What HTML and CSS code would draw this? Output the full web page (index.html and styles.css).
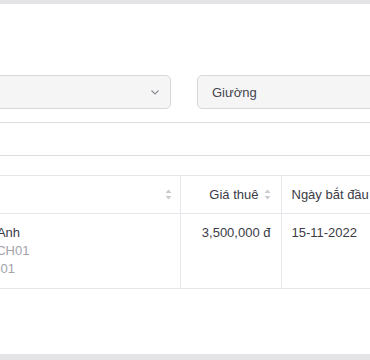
FILE: index.html
```html
<!DOCTYPE html>
<html lang="vi">

<head>
    <meta charset="UTF-8">
    <meta name="viewport" content="width=device-width, initial-scale=1.0">
    <title>Hợp đồng thuê</title>
    <link rel="stylesheet" href="styles.css">
</head>

<body>
    <div class="topbar"></div>

    <main class="panel">
        <div class="filters">
            <div class="select">
                <span class="select-value"></span>
                <svg class="select-arrow" width="8" height="5" viewBox="0 0 8 5">
                    <polyline points="0.5,0.5 4,4 7.5,0.5" fill="none" stroke="#8a8a92" stroke-width="1.1" />
                </svg>
            </div>
            <div class="select">
                <span class="select-value">Giường</span>
            </div>
        </div>

        <div class="toolbar"></div>

        <table class="grid">
            <colgroup>
                <col class="col-name">
                <col class="col-price">
                <col class="col-date">
            </colgroup>
            <thead>
                <tr>
                    <th>
                        <div class="th-inner spread">
                            <span>Khách</span>
                            <svg class="sort" width="7" height="11" viewBox="0 0 7 11">
                                <polygon points="3.5,0.5 6.5,4 0.5,4" />
                                <polygon points="0.5,7 6.5,7 3.5,10.5" />
                            </svg>
                        </div>
                    </th>
                    <th>
                        <div class="th-inner end">
                            <span>Giá thuê</span>
                            <svg class="sort" width="7" height="11" viewBox="0 0 7 11">
                                <polygon points="3.5,0.5 6.5,4 0.5,4" />
                                <polygon points="0.5,7 6.5,7 3.5,10.5" />
                            </svg>
                        </div>
                    </th>
                    <th>
                        <div class="th-inner">Ngày bắt đầu</div>
                    </th>
                </tr>
            </thead>
            <tbody>
                <tr>
                    <td>
                        <div>Lê Tuấn Anh</div>
                        <div class="muted">Căn hộ: CH01</div>
                        <div class="muted">Phòng: P01</div>
                    </td>
                    <td class="num">3,500,000 đ</td>
                    <td>15-11-2022</td>
                </tr>
            </tbody>
        </table>
    </main>

    <div class="bottombar"></div>
</body>

</html>
```

FILE: styles.css
```css
html,
body {
    margin: 0;
    width: 370px;
    height: 360px;
    overflow: hidden;
}

body {
    font-family: "Liberation Sans", Arial, sans-serif;
    font-size: 13px;
    color: #3b3b46;
    background: #fff;
}

.topbar {
    height: 4px;
    background: #e4e4e6;
}

.bottombar {
    height: 6px;
    background: #e4e4e6;
}

.panel {
    box-sizing: border-box;
    height: 350px;
    padding-top: 71px;
    background: #fff;
}

.filters {
    display: flex;
    gap: 26px;
    margin-left: -29px;
}

.select {
    box-sizing: border-box;
    flex: none;
    width: 200px;
    height: 34px;
    display: flex;
    align-items: center;
    padding: 0 11px 0 14px;
    border: 1px solid #d7d7dd;
    border-radius: 5px;
    background: #f5f5f6;
    color: #44444e;
}

.select-arrow {
    margin-left: auto;
}

.toolbar {
    margin-top: 13px;
    height: 32px;
    border-top: 1px solid #dcdce2;
    border-bottom: 1px solid #dcdce2;
}

.grid {
    margin-top: 19px;
    margin-left: -63px;
    width: 544px;
    table-layout: fixed;
    border-collapse: collapse;
}

.col-name {
    width: 243px;
}

.col-price {
    width: 101px;
}

.grid th,
.grid td {
    border: 1px solid #e6e6eb;
    border-left: none;
    padding: 0 10px;
    text-align: left;
    font-weight: normal;
}

.grid th + th,
.grid td + td {
    border-left: 1px solid #e6e6eb;
}

.grid th {
    height: 37px;
    padding-top: 0;
    padding-bottom: 0;
}

.grid th:first-child {
    padding-right: 8px;
}

.th-inner {
    display: flex;
    align-items: center;
    gap: 5px;
}

.th-inner.spread {
    justify-content: space-between;
}

.th-inner.end {
    justify-content: flex-end;
}

.sort {
    flex: none;
    fill: #cbcbd1;
}

.grid td {
    vertical-align: top;
    padding-top: 10px;
    padding-bottom: 10px;
    line-height: 18px;
}

.grid td.num {
    text-align: right;
}

.muted {
    color: #a2a2aa;
}
```
